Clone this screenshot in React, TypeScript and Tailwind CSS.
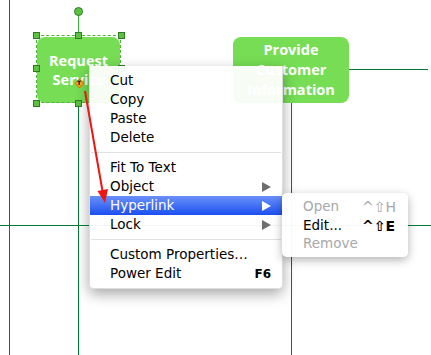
import React from "react";

const font = { fontFamily: '"DejaVu Sans", "Liberation Sans", sans-serif' };
const boxFont = { fontFamily: '"Open Sans", "DejaVu Sans", sans-serif' };

function Handle({ x, y }: { x: number; y: number }) {
  return (
    <div
      className="absolute w-[7px] h-[7px] bg-[#5cc040] border border-[#2e7d22]"
      style={{ left: x - 3.5, top: y - 3.5 }}
    />
  );
}

function Arrow({ white }: { white?: boolean }) {
  return (
    <svg width="9" height="10" viewBox="0 0 9 10">
      <polygon points="0,0 9,5 0,10" fill={white ? "#ffffff" : "#6e6e6e"} />
    </svg>
  );
}

type Item = { label?: string; sep?: boolean; arrow?: boolean; hl?: boolean; key?: string };

const items: Item[] = [
  { label: "Cut" },
  { label: "Copy" },
  { label: "Paste" },
  { label: "Delete" },
  { sep: true },
  { label: "Fit To Text" },
  { label: "Object", arrow: true },
  { label: "Hyperlink", arrow: true, hl: true },
  { label: "Lock", arrow: true },
  { sep: true },
  { label: "Custom Properties…" },
  { label: "Power Edit", key: "F6" },
];

export default function App() {
  return (
    <div className="relative w-[431px] h-[355px] bg-white overflow-hidden" style={font}>
      {/* connector lines */}
      <div className="absolute left-[9px] top-0 w-px h-[355px] bg-[#007a36]" />
      <div className="absolute left-[78px] top-[103px] w-px h-[252px] bg-[#007a36]" />
      <div className="absolute left-[78px] top-[12px] w-px h-[23px] bg-[#3db53a]" />
      <div className="absolute left-0 top-[225px] w-[431px] h-px bg-[#007a36]" />
      <div className="absolute left-[291px] top-[103px] w-px h-[252px] bg-[#007a36]" />
      <div className="absolute left-[349px] top-[69px] w-[79px] h-px bg-[#007a36]" />

      {/* Request Service box */}
      <div
        className="absolute left-[37px] top-[37px] w-[83px] h-[66px] rounded-[8px] bg-[#76dd55] flex flex-col items-center justify-center text-white font-bold text-[14.5px] leading-[19px]"
        style={boxFont}
      >
        <span>Request</span>
        <span>Service</span>
      </div>
      <div className="absolute left-[36px] top-[35px] w-[85px] h-[68px] border border-dashed border-[#4cb53a]" />
      <Handle x={36.5} y={35} />
      <Handle x={78.5} y={35} />
      <Handle x={121} y={35} />
      <Handle x={36.5} y={68.5} />
      <Handle x={121} y={68.5} />
      <Handle x={36.5} y={103} />
      <Handle x={78.5} y={103} />
      <Handle x={121} y={103} />
      <div className="absolute left-[74px] top-[7px] w-[9px] h-[9px] rounded-full bg-[#5cc040] border border-[#2e7d22]" />
      {/* text marker */}
      <div className="absolute left-[74px] top-[78px] w-[10px] h-[10px] flex items-center justify-center">
        <div className="absolute w-[7px] h-[7px] rotate-45 bg-[#f5b41c] border border-[#c57f0a]" />
        <span className="relative text-[6px] font-bold text-black leading-none">T</span>
      </div>

      {/* Provide Customer Information box */}
      <div
        className="absolute left-[233px] top-[37px] w-[116px] h-[66px] rounded-[8px] bg-[#76dd55] flex flex-col items-center justify-center text-white font-bold text-[14.5px] leading-[20px]"
        style={boxFont}
      >
        <span>Provide</span>
        <span>Customer</span>
        <span>Information</span>
      </div>

      {/* Context menu */}
      <div className="absolute left-[89px] top-[66px] w-[194px] pt-[5px] pb-[5px] bg-[rgba(255,255,255,0.94)] rounded-b-[5px] shadow-[0_5px_14px_rgba(0,0,0,0.35)] border-l border-b border-r border-[#c8c8c8]/60 text-[13.5px] text-black">
        {items.map((it, i) =>
          it.sep ? (
            <div key={i} className="h-[11px] flex items-center px-[1px]">
              <div className="w-full h-px bg-[#e0e0e0]" />
            </div>
          ) : (
            <div
              key={i}
              className={
                "h-[19px] flex items-center pl-[20px] pr-[11px] " +
                (it.hl ? "bg-gradient-to-b from-[#6a8ff8] to-[#1a4ef0] text-white" : "")
              }
            >
              <span className="flex-1 leading-none">{it.label}</span>
              {it.arrow && <Arrow white={it.hl} />}
              {it.key && <span className="text-[12px] font-bold leading-none">{it.key}</span>}
            </div>
          )
        )}
      </div>

      {/* Submenu */}
      <div className="absolute left-[282px] top-[193px] w-[126px] h-[64px] pt-[4px] bg-[rgba(255,255,255,0.96)] rounded-[5px] shadow-[0_3px_10px_rgba(0,0,0,0.3)] text-[13.5px]">
        <div className="h-[19px] flex items-center pl-[21px] text-[#a8a8a8]">
          <span className="flex-1 leading-none">Open</span>
          <span className="w-[46px] leading-none text-[14px]">^⇧H</span>
        </div>
        <div className="h-[19px] flex items-center pl-[21px] text-black">
          <span className="flex-1 leading-none">Edit...</span>
          <span className="w-[46px] leading-none text-[14px] font-bold">^⇧E</span>
        </div>
        <div className="h-[18px] flex items-center pl-[21px] text-[#a8a8a8]">
          <span className="flex-1 leading-none">Remove</span>
        </div>
      </div>

      {/* red arrow */}
      <svg className="absolute left-0 top-0" width="431" height="355" viewBox="0 0 431 355">
        <line x1="85" y1="91" x2="102.5" y2="191" stroke="#f01515" strokeWidth="2" />
        <polygon points="105,203 108,189 97.5,191" fill="#f01515" />
      </svg>
    </div>
  );
}
